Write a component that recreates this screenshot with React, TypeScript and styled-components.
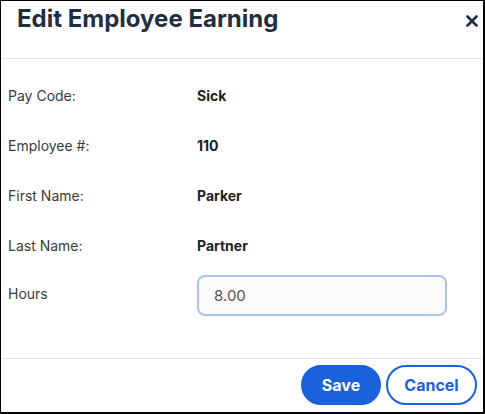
import React from "react";
import styled, { createGlobalStyle } from "styled-components";

const GlobalStyle = createGlobalStyle`
  html, body {
    margin: 0;
    padding: 0;
    background: #fff;
  }
  * {
    box-sizing: border-box;
  }
`;

const StyledModal = styled.div`
  width: 485px;
  height: 414px;
  display: flex;
  flex-direction: column;
  background: #fff;
  border-style: solid;
  border-color: #000;
  border-width: 1px 2px 2px 1px;
  font-family: "Inter", "Liberation Sans", sans-serif;
`;

const StyledHeader = styled.div`
  height: 58px;
  display: flex;
  justify-content: space-between;
  align-items: flex-start;
  padding: 3px 5px 0 16px;
  border-bottom: 1px solid #e3e3e3;
`;

const StyledTitle = styled.h2`
  margin: 0;
  font-size: 24px;
  line-height: 29px;
  font-weight: 700;
  color: #1f2e40;
`;

const StyledClose = styled.button`
  border: none;
  background: none;
  padding: 0;
  margin-top: 11px;
  width: 12px;
  height: 12px;
  cursor: pointer;
  display: flex;
`;

const StyledBody = styled.div`
  flex: 1;
  padding: 11px 0 0 7px;
  border-bottom: 1px solid #e3e3e3;
`;

const StyledRow = styled.div`
  height: 50px;
  display: grid;
  grid-template-columns: 189px 250px;
  align-items: center;
`;

const StyledLabel = styled.span<{ $lift?: number }>`
  font-size: 14px;
  color: #3b3b3b;
  margin-bottom: ${(p) => p.$lift ?? 0}px;
`;

const StyledValue = styled.span`
  font-size: 14px;
  font-weight: 700;
  color: #222;
`;

const StyledInput = styled.input`
  width: 250px;
  height: 41px;
  margin-top: 1px;
  padding: 0 15px;
  border: 2px solid #a7c5ec;
  border-radius: 8px;
  background: #fbfbfb;
  font-family: "Inter", "Liberation Sans", sans-serif;
  font-size: 15px;
  color: #555;
  outline: none;
`;

const StyledFooter = styled.div`
  height: 53px;
  display: flex;
  justify-content: flex-end;
  align-items: center;
  gap: 5px;
  padding: 0 6px 2px 0;
`;

const StyledButton = styled.button<{ $primary?: boolean }>`
  height: 40px;
  width: ${(p) => (p.$primary ? "80px" : "91px")};
  padding: 0;
  border-radius: 20px;
  border: 2px solid #1a62db;
  background: ${(p) => (p.$primary ? "#1a62db" : "#fff")};
  color: ${(p) => (p.$primary ? "#fff" : "#1a62db")};
  font-family: "Inter", "Liberation Sans", sans-serif;
  font-size: 16px;
  font-weight: 700;
  cursor: pointer;
`;

const rows = [
  { label: "Pay Code:", value: "Sick" },
  { label: "Employee #:", value: "110" },
  { label: "First Name:", value: "Parker" },
  { label: "Last Name:", value: "Partner" },
];

const App = () => {
  return (
    <>
      <GlobalStyle />
      <StyledModal>
        <StyledHeader>
          <StyledTitle>Edit Employee Earning</StyledTitle>
          <StyledClose aria-label="Close">
            <svg width="12" height="12" viewBox="0 0 12 12">
              <path
                d="M1.5 1.5 L10.5 10.5 M10.5 1.5 L1.5 10.5"
                stroke="#1f2e40"
                strokeWidth="2.6"
                strokeLinecap="round"
              />
            </svg>
          </StyledClose>
        </StyledHeader>
        <StyledBody>
          {rows.map((r) => (
            <StyledRow key={r.label}>
              <StyledLabel>{r.label}</StyledLabel>
              <StyledValue>{r.value}</StyledValue>
            </StyledRow>
          ))}
          <StyledRow>
            <StyledLabel $lift={4}>Hours</StyledLabel>
            <StyledInput defaultValue="8.00" />
          </StyledRow>
        </StyledBody>
        <StyledFooter>
          <StyledButton $primary>Save</StyledButton>
          <StyledButton>Cancel</StyledButton>
        </StyledFooter>
      </StyledModal>
    </>
  );
};

export default App;
